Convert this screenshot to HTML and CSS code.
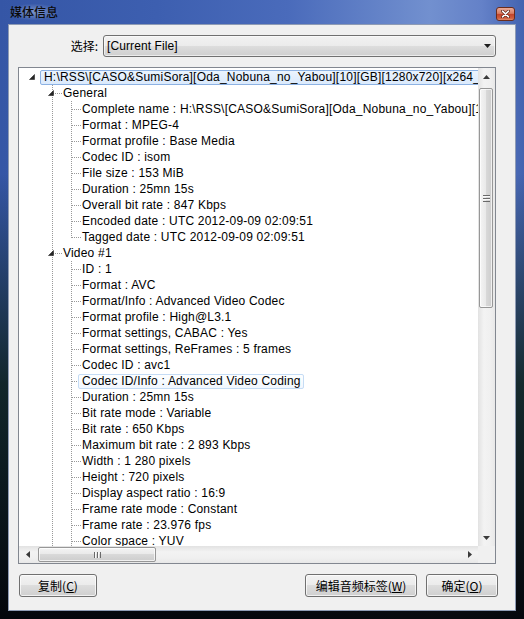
FILE: index.html
```html
<!DOCTYPE html>
<html lang="zh-cn">
<head>
  <meta charset="UTF-8" />
  <title>媒体信息</title>
  <link rel="stylesheet" href="styles.css">
</head>
<body>
  <div class="window">
    <div class="titlebar">
      <span class="title">媒体信息</span>
      <span class="close">
        <svg width="9" height="8" viewBox="0 0 9 8">
          <path d="M1.5 1.2L7.5 6.8M7.5 1.2L1.5 6.8" stroke="#5a2010" stroke-width="3" stroke-linecap="round"/>
          <path d="M1.5 1.2L7.5 6.8M7.5 1.2L1.5 6.8" stroke="#fff" stroke-width="1.6" stroke-linecap="round"/>
        </svg>
      </span>
    </div>

    <div class="client">
      <div class="pick">
        <label class="pick-label">选择:</label>
        <div class="combo">
          <span>[Current File]</span>
          <svg width="7" height="4" viewBox="0 0 7 4"><path d="M0 0H7L3.5 4Z" fill="#1e1e1e"/></svg>
        </div>
      </div>

      <div class="treebox">
        <div class="view">
          <ul class="tree">
            <li class="top">
              <div class="row"><span class="exp"><svg width="6" height="6" viewBox="0 0 6 6"><path d="M5.5 0.5V5.5H0.5Z" fill="#262626" stroke="#262626" stroke-width="0.6"/></svg></span><span class="label sel">H:\RSS\[CASO&amp;SumiSora][Oda_Nobuna_no_Yabou][10][GB][1280x720][x264_aac].mp4</span></div>
              <ul>
                <li>
                  <div class="row"><span class="exp"><svg width="6" height="6" viewBox="0 0 6 6"><path d="M5.5 0.5V5.5H0.5Z" fill="#262626" stroke="#262626" stroke-width="0.6"/></svg></span><span class="label">General</span></div>
                  <ul>
                    <li><div class="row"><span class="exp"></span><span class="label">Complete name : H:\RSS\[CASO&amp;SumiSora][Oda_Nobuna_no_Yabou][10][GB][1280x720][x264_aac].mp4</span></div></li>
                    <li><div class="row"><span class="exp"></span><span class="label">Format : MPEG-4</span></div></li>
                    <li><div class="row"><span class="exp"></span><span class="label">Format profile : Base Media</span></div></li>
                    <li><div class="row"><span class="exp"></span><span class="label">Codec ID : isom</span></div></li>
                    <li><div class="row"><span class="exp"></span><span class="label">File size : 153 MiB</span></div></li>
                    <li><div class="row"><span class="exp"></span><span class="label">Duration : 25mn 15s</span></div></li>
                    <li><div class="row"><span class="exp"></span><span class="label">Overall bit rate : 847 Kbps</span></div></li>
                    <li><div class="row"><span class="exp"></span><span class="label">Encoded date : UTC 2012-09-09 02:09:51</span></div></li>
                    <li class="last"><div class="row"><span class="exp"></span><span class="label">Tagged date : UTC 2012-09-09 02:09:51</span></div></li>
                  </ul>
                </li>
                <li>
                  <div class="row"><span class="exp"><svg width="6" height="6" viewBox="0 0 6 6"><path d="M5.5 0.5V5.5H0.5Z" fill="#262626" stroke="#262626" stroke-width="0.6"/></svg></span><span class="label">Video #1</span></div>
                  <ul>
                    <li><div class="row"><span class="exp"></span><span class="label">ID : 1</span></div></li>
                    <li><div class="row"><span class="exp"></span><span class="label">Format : AVC</span></div></li>
                    <li><div class="row"><span class="exp"></span><span class="label">Format/Info : Advanced Video Codec</span></div></li>
                    <li><div class="row"><span class="exp"></span><span class="label">Format profile : High@L3.1</span></div></li>
                    <li><div class="row"><span class="exp"></span><span class="label">Format settings, CABAC : Yes</span></div></li>
                    <li><div class="row"><span class="exp"></span><span class="label">Format settings, ReFrames : 5 frames</span></div></li>
                    <li><div class="row"><span class="exp"></span><span class="label">Codec ID : avc1</span></div></li>
                    <li><div class="row"><span class="exp"></span><span class="label hot">Codec ID/Info : Advanced Video Coding</span></div></li>
                    <li><div class="row"><span class="exp"></span><span class="label">Duration : 25mn 15s</span></div></li>
                    <li><div class="row"><span class="exp"></span><span class="label">Bit rate mode : Variable</span></div></li>
                    <li><div class="row"><span class="exp"></span><span class="label">Bit rate : 650 Kbps</span></div></li>
                    <li><div class="row"><span class="exp"></span><span class="label">Maximum bit rate : 2 893 Kbps</span></div></li>
                    <li><div class="row"><span class="exp"></span><span class="label">Width : 1 280 pixels</span></div></li>
                    <li><div class="row"><span class="exp"></span><span class="label">Height : 720 pixels</span></div></li>
                    <li><div class="row"><span class="exp"></span><span class="label">Display aspect ratio : 16:9</span></div></li>
                    <li><div class="row"><span class="exp"></span><span class="label">Frame rate mode : Constant</span></div></li>
                    <li><div class="row"><span class="exp"></span><span class="label">Frame rate : 23.976 fps</span></div></li>
                    <li><div class="row"><span class="exp"></span><span class="label">Color space : YUV</span></div></li>
                    <li><div class="row"><span class="exp"></span><span class="label">Chroma subsampling : 4:2:0</span></div></li>
                    <li class="last"><div class="row"><span class="exp"></span><span class="label">Bit depth : 8 bits</span></div></li>
                  </ul>
                </li>
                <li class="last">
                  <div class="row"><span class="exp"></span><span class="label">Audio #1</span></div>
                </li>
              </ul>
            </li>
          </ul>
        </div>

        <div class="vscroll">
          <div class="sbtn"><svg width="7" height="4" viewBox="0 0 7 4"><path d="M0 4L3.5 0L7 4Z" fill="#3a3a3a"/></svg></div>
          <div class="vtrack">
            <div class="vthumb"><span class="vgrip"></span></div>
          </div>
          <div class="sbtn"><svg width="7" height="4" viewBox="0 0 7 4"><path d="M0 0H7L3.5 4Z" fill="#3a3a3a"/></svg></div>
        </div>

        <div class="hscroll">
          <div class="sbtn"><svg width="4" height="7" viewBox="0 0 4 7"><path d="M4 0V7L0 3.5Z" fill="#3a3a3a"/></svg></div>
          <div class="htrack">
            <div class="hthumb"><span class="hgrip"></span></div>
          </div>
          <div class="sbtn"><svg width="4" height="7" viewBox="0 0 4 7"><path d="M0 0V7L4 3.5Z" fill="#3a3a3a"/></svg></div>
        </div>

        <div class="corner"></div>
      </div>

      <div class="buttons">
        <button class="btn btn-copy">复制(<u>C</u>)</button>
        <span class="spacer"></span>
        <button class="btn btn-tag">编辑音频标签(<u>W</u>)</button>
        <button class="btn btn-ok">确定(<u>O</u>)</button>
      </div>
    </div>
  </div>
</body>
</html>
```

FILE: styles.css
```css
html, body {
  margin: 0;
  padding: 0;
  width: 524px;
  height: 619px;
  overflow: hidden;
}
body {
  background: #000;
  font-family: "Liberation Sans", "Noto Sans CJK SC", sans-serif;
  font-size: 12px;
  color: #000;
}
.window {
  width: 524px;
  height: 619px;
  display: flex;
  flex-direction: column;
  background:
    linear-gradient(to bottom, rgba(0,0,0,0) 0, rgba(0,0,0,0) 28%, rgba(10,28,16,0.82) 62%, rgba(0,0,0,0.93) 100%),
    linear-gradient(to right, #3556a6 0%, #3d5fb0 30%, #4a6bbb 55%, #7290cf 82%, #6481c8 92%, #4363b0 100%);
}
.titlebar {
  height: 24px;
  flex: none;
  display: flex;
  justify-content: space-between;
  align-items: flex-start;
  padding: 0 9px 0 10px;
}
.title {
  margin-top: 4px;
  line-height: 16px;
  font-family: "Noto Sans CJK SC", sans-serif;
  font-size: 12px;
  font-weight: 500;
  color: #0a0a0a;
  border-radius: 8px;
  background: radial-gradient(ellipse at center, rgba(210,222,245,0.45) 0, rgba(210,222,245,0) 75%);
}
.close {
  margin-top: 7px;
  width: 19px;
  height: 14px;
  box-sizing: border-box;
  border: 1px solid #6a2c1c;
  border-radius: 3px;
  background: linear-gradient(#eaaa98, #d77d63 45%, #c2442b 52%, #cf5e3e 85%, #e2906e);
  display: flex;
  align-items: center;
  justify-content: center;
}
.close svg { display: block; }

.client {
  flex: 1;
  margin: 0 8px 8px 8px;
  padding: 10px 19px 0 9px;
  background: #f0f0f0;
  border: 1px solid #8e9bb4;
  display: flex;
  flex-direction: column;
}

/* select row */
.pick {
  display: flex;
  align-items: center;
  gap: 5px;
  height: 22px;
}
.pick-label {
  width: 80px;
  text-align: right;
  font-family: "Noto Sans CJK SC", sans-serif;
  font-size: 12px;
  line-height: 16px;
}
.combo {
  flex: 1;
  height: 22px;
  box-sizing: border-box;
  border: 1px solid #707070;
  border-radius: 3px;
  background: linear-gradient(#f2f2f2 0, #ebebeb 50%, #dddddd 50%, #cfcfcf 100%);
  box-shadow: inset 0 0 0 1px rgba(255,255,255,0.6);
  display: flex;
  align-items: center;
  justify-content: space-between;
  padding: 0 4px 0 3px;
}
.combo span { line-height: 16px; letter-spacing: 0.1px; }

/* tree */
.treebox {
  margin-top: 10px;
  height: 497px;
  box-sizing: border-box;
  border: 1px solid #828790;
  display: grid;
  grid-template-columns: 459px 17px;
  grid-template-rows: 478px 17px;
  background: #fff;
}
.view {
  overflow: hidden;
  background: #fff;
  padding-top: 1px;
  letter-spacing: 0.2px;
}
.tree, .tree ul {
  list-style: none;
  margin: 0;
  padding: 0;
}
.tree ul {
  padding-left: 19px;
}
.tree ul li {
  background-image: repeating-linear-gradient(to bottom, #999 0 1px, transparent 1px 2px);
  background-repeat: no-repeat;
  background-size: 1px 100%;
  background-position: 14px 0;
}
.tree ul li.last {
  background-size: 1px 9px;
}
.row {
  display: flex;
  align-items: flex-start;
  height: 16px;
  padding-left: 6px;
  white-space: nowrap;
}
.tree ul .row {
  background-image: repeating-linear-gradient(to right, #999 0 1px, transparent 1px 2px);
  background-repeat: no-repeat;
  background-size: 9px 1px;
  background-position: 15px 8px;
}
.exp {
  width: 16px;
  height: 16px;
  flex: none;
  display: flex;
  align-items: center;
}
.exp svg {
  display: block;
  margin-left: 4px;
}
.label {
  flex: none;
  margin: 1px 0 0 -1px;
  height: 15px;
  box-sizing: border-box;
  line-height: 13px;
  padding: 0 2px 0 3px;
  border: 1px solid transparent;
  border-radius: 2px;
}
.label.sel {
  border-color: #8db2e3;
  background: linear-gradient(#ebf4fe, #dbeafc);
}
.label.hot {
  border-color: #c5dcf5;
  background: linear-gradient(#fdfeff, #f1f7fe);
}

/* scrollbars */
.vscroll {
  display: flex;
  flex-direction: column;
  background: linear-gradient(to right, #e2e2e2, #f3f3f3 35%, #f0f0f0 70%, #e8e8e8);
}
.hscroll {
  display: flex;
  background: linear-gradient(#e2e2e2, #f3f3f3 35%, #f0f0f0 70%, #e8e8e8);
}
.sbtn {
  width: 17px;
  height: 17px;
  flex: none;
  display: flex;
  align-items: center;
  justify-content: center;
}
.sbtn svg { display: block; }
.vtrack {
  flex: 1;
  padding-top: 3px;
}
.vthumb {
  height: 220px;
  width: 14px;
  margin-left: 1px;
  box-sizing: border-box;
  border: 1px solid #979797;
  border-radius: 2px;
  background: linear-gradient(to right, #f4f4f4, #e9e9e9 50%, #d9d9d9 50%, #cdcdcd);
  box-shadow: inset 0 0 0 1px rgba(255,255,255,0.7);
  display: flex;
  align-items: center;
  justify-content: center;
}
.vgrip {
  width: 7px;
  height: 7px;
  background: repeating-linear-gradient(to bottom, #6a6a6a 0 1px, #fafafa 1px 2px, transparent 2px 3px);
}
.htrack {
  flex: 1;
  padding-left: 2px;
  display: flex;
  align-items: center;
}
.hthumb {
  width: 118px;
  height: 15px;
  box-sizing: border-box;
  border: 1px solid #979797;
  border-radius: 2px;
  background: linear-gradient(#f4f4f4, #e9e9e9 50%, #d9d9d9 50%, #cdcdcd);
  box-shadow: inset 0 0 0 1px rgba(255,255,255,0.7);
  display: flex;
  align-items: center;
  justify-content: center;
}
.hgrip {
  width: 7px;
  height: 6px;
  background: repeating-linear-gradient(to right, #6a6a6a 0 1px, #fafafa 1px 2px, transparent 2px 3px);
}
.corner {
  background: #f0f0f0;
}

/* buttons */
.buttons {
  display: flex;
  gap: 9px;
  margin: 10px -2px 0 1px;
}
.spacer { flex: 1; }
.btn {
  height: 23px;
  box-sizing: border-box;
  border: 1px solid #707070;
  border-radius: 3px;
  background: linear-gradient(#f2f2f2 0, #ebebeb 50%, #dddddd 50%, #cfcfcf 100%);
  box-shadow: inset 0 0 0 1px rgba(255,255,255,0.7);
  font-family: "Noto Sans CJK SC", sans-serif;
  font-size: 12px;
  line-height: 16px;
  color: #000;
  padding: 0;
}
.btn-copy { width: 78px; }
.btn-tag { width: 112px; }
.btn-ok { width: 72px; }
```
